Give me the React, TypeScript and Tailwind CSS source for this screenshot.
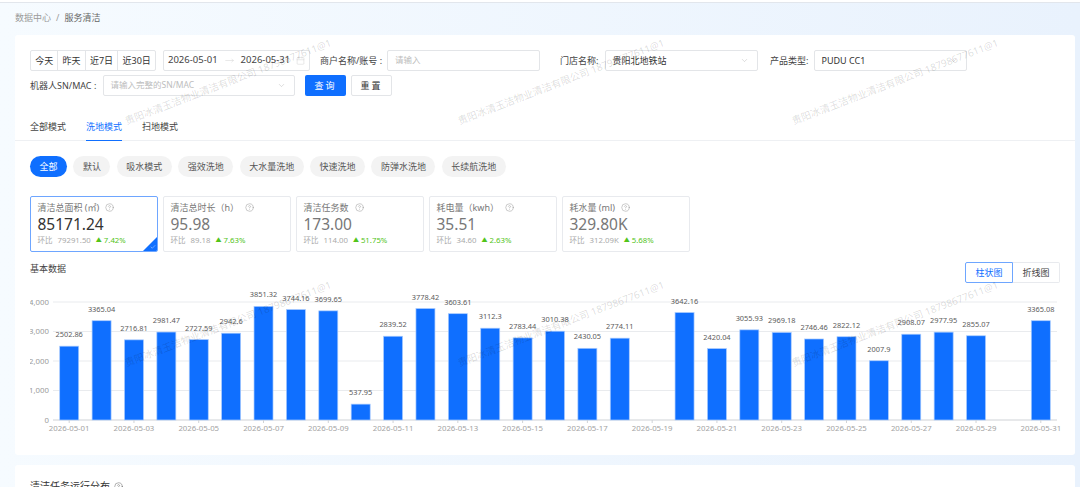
import React from 'react';
import { ChevronDown, CircleHelp, Calendar, Check, MoveRight } from 'lucide-react';

const quickRanges = ['今天', '昨天', '近7日', '近30日'];
const modePills = ['全部', '默认', '吸水模式', '强效洗地', '大水量洗地', '快速洗地', '防弹水洗地', '长续航洗地'];

const stats = [
  { title: '清洁总面积 (㎡)', value: '85171.24', prev: '79291.50', rate: '7.42%', active: true },
  { title: '清洁总时长（h）', value: '95.98', prev: '89.18', rate: '7.63%' },
  { title: '清洁任务数', value: '173.00', prev: '114.00', rate: '51.75%' },
  { title: '耗电量（kwh）', value: '35.51', prev: '34.60', rate: '2.63%' },
  { title: '耗水量 (ml)', value: '329.80K', prev: '312.09K', rate: '5.68%' },
];

const daily: (number | null)[] = [
  2502.86, 3365.04, 2716.81, 2981.47, 2727.59, 2942.6, 3851.32, 3744.16, 3699.65, 537.95, 2839.52,
  3778.42, 3603.61, 3112.3, 2783.44, 3010.38, 2430.05, 2774.11, null, 3642.16, 2420.04, 3055.93,
  2969.18, 2746.46, 2822.12, 2007.9, 2908.07, 2977.95, 2855.07, null, 3365.08,
];

const watermarks = [
  'left-[125px] top-[116px]',
  'left-[458px] top-[116px]',
  'left-[792px] top-[116px]',
  'left-[125px] top-[358px]',
  'left-[458px] top-[358px]',
  'left-[792px] top-[358px]',
];

const BarChart = () => {
  // svg origin sits at page (30, 290)
  const plotLeft = 23;
  const plotRight = 1027;
  const baseY = 130;
  const topY = 12;
  const pitch = (plotRight - plotLeft) / 31;
  const centerX = (i: number) => plotLeft + pitch * (i + 0.5);
  const toY = (v: number) => baseY - (v / 4000) * (baseY - topY);

  return (
    <svg width="1045" height="155" viewBox="0 0 1045 155" className="block">
      {[0, 1000, 2000, 3000, 4000].map(v => (
        <g key={v}>
          <line x1={plotLeft} x2={plotRight} y1={toY(v)} y2={toY(v)} stroke={v === 0 ? '#cfd2d6' : '#e9ebee'} />
          <text x={plotLeft - 4} y={toY(v) + 2.5} textAnchor="end" fontSize="7.8" fill="#9a9a9a">
            {v.toLocaleString('en-US')}
          </text>
        </g>
      ))}
      {daily.map((v, i) => {
        const day = `2026-05-${String(i + 1).padStart(2, '0')}`;
        return (
          <g key={day}>
            {v !== null && (
              <>
                <rect x={centerX(i) - 9.5} y={toY(v)} width="19" height={baseY - toY(v)} fill="#0f6fff" stroke="#a8cbff" strokeWidth="0.7" />
                <text x={centerX(i)} y={toY(v) - 9} textAnchor="middle" fontSize="7.4" fill="#5c5c5c">
                  {String(v)}
                </text>
              </>
            )}
            {i % 2 === 0 && (
              <>
                <line x1={centerX(i)} x2={centerX(i)} y1={baseY} y2={baseY + 3} stroke="#cfd2d6" />
                <text x={centerX(i)} y={baseY + 11} textAnchor="middle" fontSize="7.8" fill="#a3a3a3">
                  {day}
                </text>
              </>
            )}
          </g>
        );
      })}
    </svg>
  );
};

const SelectBox = ({ text, placeholder, className }: { text: string; placeholder?: boolean; className: string }) => (
  <div className={`flex h-[21px] items-center justify-between rounded-[2px] border border-[#e3e5e8] bg-white pl-[6.5px] pr-2 ${className}`}>
    <span className={placeholder ? 'text-[8.5px] text-[#bdbdbd]' : 'text-[9px] text-[#333]'}>{text}</span>
    <ChevronDown size={9} strokeWidth={1.2} className="text-[#b5b5b5]" />
  </div>
);

export default function App() {
  return (
    <div className="relative h-[487px] w-[1080px] overflow-hidden bg-gradient-to-r from-[#f6fbff] to-[#e9f2fd] font-['Noto_Sans','Noto_Sans_CJK_SC',sans-serif]">
      <div className="h-[3px] border-b border-[#e2e6ec] bg-white" />

      <div className="flex h-[32px] items-center px-[15px] pb-[3px] text-[9px]">
        <span className="text-[#9b9b9b]">数据中心</span>
        <span className="mx-[5px] text-[#9b9b9b]">/</span>
        <span className="text-[#666]">服务清洁</span>
      </div>

      <div className="ml-[15px] h-[420px] w-[1060px] rounded-[3px] bg-white pt-[15px]">
        <div className="flex items-center pl-[15px]">
          <div className="flex h-[21px] w-[126px] justify-between rounded-[2px] border border-[#e3e5e8] text-[9px] text-[#333]">
            {quickRanges.map((label, i) => (
              <div key={label} className={`flex grow items-center justify-center ${i > 0 ? 'border-l border-[#e3e5e8]' : ''}`}>
                {label}
              </div>
            ))}
          </div>
          <div className="ml-[7px] flex h-[21px] w-[147px] items-center rounded-[2px] border border-[#e3e5e8] pl-[4px] pr-[4px] text-[9.5px] text-[#444]">
            <span>2026-05-01</span>
            <MoveRight size={9} strokeWidth={1} className="mx-[7px] text-[#c4c4c4]" />
            <span>2026-05-31</span>
            <Calendar size={9} strokeWidth={1} className="ml-auto text-[#c4c4c4]" />
          </div>
          <span className="ml-[10px] w-[67px] text-[9px] text-[#444]">商户名称/账号 :</span>
          <div className="flex h-[21px] w-[153px] items-center rounded-[2px] border border-[#e3e5e8] pl-[7px] text-[8.5px] text-[#bdbdbd]">请输入</div>
          <span className="ml-[20px] w-[45px] text-[9px] text-[#444]">门店名称:</span>
          <SelectBox text="贵阳北地铁站" className="w-[153px]" />
          <span className="ml-[12px] w-[44px] text-[9px] text-[#444]">产品类型:</span>
          <SelectBox text="PUDU CC1" className="w-[153px]" />
        </div>

        <div className="mt-[4px] flex items-center pl-[15px]">
          <span className="w-[73px] text-[9px] text-[#444]">机器人SN/MAC :</span>
          <SelectBox text="请输入完整的SN/MAC" placeholder className="w-[192px]" />
          <button className="ml-[10px] h-[21px] w-[41px] rounded-[2px] bg-[#0f6fff] text-[9px] tracking-[2px] text-white">查询</button>
          <button className="ml-[5px] h-[21px] w-[41px] rounded-[2px] border border-[#e3e5e8] text-[9px] tracking-[2px] text-[#333]">重置</button>
        </div>

        <div className="mt-[16px] flex h-[29px] gap-[20px] border-b border-[#eef0f3] pl-[15px] text-[9px]">
          <div className="flex h-full items-center pt-[1px] text-[#444]">全部模式</div>
          <div className="-mb-px flex h-[29px] items-center border-b-[1.5px] border-[#0f6fff] pt-[1px] text-[#0f6fff]">洗地模式</div>
          <div className="flex h-full items-center pt-[1px] text-[#444]">扫地模式</div>
        </div>

        <div className="mt-[15px] flex gap-[6.4px] pl-[15px]">
          {modePills.map((pill, i) => (
            <div
              key={pill}
              className={`flex h-[21px] items-center rounded-full px-[9.5px] text-[9px] ${i === 0 ? 'bg-[#0f6fff] text-white' : 'bg-[#f3f3f3] text-[#555]'}`}
            >
              {pill}
            </div>
          ))}
        </div>

        <div className="mt-[19px] flex gap-[5px] pl-[15px]">
          {stats.map(stat => (
            <div
              key={stat.title}
              className={`relative h-[56px] w-[128px] overflow-hidden rounded-[2px] border px-[6.5px] pt-[4px] ${stat.active ? 'border-[#6ea6ff]' : 'border-[#e8eaee]'}`}
            >
              <div className="flex h-[12px] items-center text-[9px] leading-none text-[#777]">
                <span>{stat.title}</span>
                <CircleHelp size={9} strokeWidth={1.2} className="ml-[6px] text-[#8c8c8c]" />
              </div>
              <div className={`mt-[1px] text-[15.5px] leading-[20px] ${stat.active ? 'text-[#333]' : 'text-[#777]'}`}>{stat.value}</div>
              <div className="mt-[1px] flex items-center text-[7.8px] leading-[10px] text-[#aaa]">
                <span className="text-[7.5px]">环比</span>
                <span className="ml-[5px]">{stat.prev}</span>
                <span className="ml-[5px] flex items-center gap-[2px] text-[#52c41a]">
                  <span className="text-[6px]">▲</span>
                  {stat.rate}
                </span>
              </div>
              {stat.active && (
                <>
                  <div className="absolute bottom-0 right-0 h-0 w-0 border-b-[14px] border-l-[14px] border-b-[#0f6fff] border-l-transparent" />
                  <Check size={6} strokeWidth={1.5} className="absolute bottom-[1px] right-[1px] text-white" />
                </>
              )}
            </div>
          ))}
        </div>

        <div className="mt-[9px] flex h-[22px] items-start justify-between px-[15px]">
          <span className="mt-[1px] text-[9px] text-[#444]">基本数据</span>
          <div className="mt-[1px] flex h-[21px] text-[9px]">
            <div className="flex w-[48px] items-center justify-center rounded-l-[2px] border border-[#6ea6ff] text-[#0f6fff]">柱状图</div>
            <div className="flex w-[47px] items-center justify-center rounded-r-[2px] border border-l-0 border-[#e8eaee] text-[#444]">折线图</div>
          </div>
        </div>

        <div className="mt-[7px] pl-[15px]">
          <BarChart />
        </div>
      </div>

      <div className="ml-[15px] mt-[10px] h-[60px] w-[1060px] rounded-[3px] bg-white px-[15px] pt-[14px]">
        <div className="flex items-center gap-[4px] text-[10px] text-[#333]">
          <span>清洁任务运行分布</span>
          <CircleHelp size={9} strokeWidth={1} />
        </div>
      </div>

      {watermarks.map(pos => (
        <div
          key={pos}
          className={`pointer-events-none absolute origin-left -rotate-[21deg] whitespace-nowrap text-[10px] leading-none text-black/15 ${pos}`}
        >
          贵阳冰清玉洁物业清洁有限公司 18798677611@1
        </div>
      ))}
    </div>
  );
}
